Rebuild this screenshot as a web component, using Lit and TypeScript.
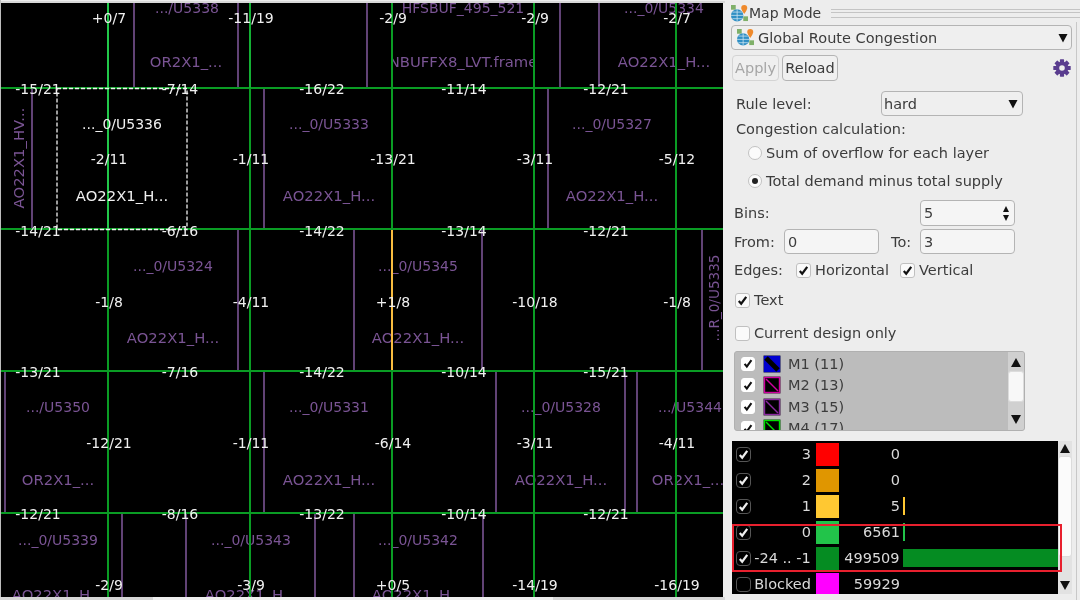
import {LitElement, css, html, svg} from 'lit';
import {customElement} from 'lit/decorators.js';

const COLS = [109, 251, 393, 535, 677];
const EDGE_COLS = [38, 180, 322, 464, 606];

// Congestion numbers, one row per grid line / grid row.
const NUMBERS: [number, number[], string[]][] = [
  [18, COLS, ['+0/7', '-11/19', '-2/9', '-2/9', '-2/7']],
  [89, EDGE_COLS, ['-15/21', '-7/14', '-16/22', '-11/14', '-12/21']],
  [159, COLS, ['-2/11', '-1/11', '-13/21', '-3/11', '-5/12']],
  [231, EDGE_COLS, ['-14/21', '-6/16', '-14/22', '-13/14', '-12/21']],
  [302, COLS, ['-1/8', '-4/11', '+1/8', '-10/18', '-1/8']],
  [372, EDGE_COLS, ['-13/21', '-7/16', '-14/22', '-10/14', '-15/21']],
  [443, COLS, ['-12/21', '-1/11', '-6/14', '-3/11', '-4/11']],
  [514, EDGE_COLS, ['-12/21', '-8/16', '-13/22', '-10/14', '-12/21']],
  [585, COLS, ['-2/9', '-3/9', '+0/5', '-14/19', '-16/19']],
];

// Cell outlines: x, y1, y2
const CELL_LINES: number[][] = [
  [134, 3, 88], [238, 3, 88], [367, 3, 88], [560, 3, 88], [599, 3, 88],
  [32, 88, 229], [264, 88, 229], [548, 88, 229],
  [238, 229, 371], [354, 229, 371], [482, 229, 371], [702, 229, 371],
  [5, 371, 513], [264, 371, 513], [496, 371, 513], [625, 371, 513], [637, 371, 513],
  [122, 513, 597], [186, 513, 597], [315, 513, 597], [354, 513, 597], [483, 513, 597],
];

const CELL_LABELS: [number, number, string][] = [
  [187, 8, '.../U5338'], [186, 61, 'OR2X1_...'], [463, 8, 'HFSBUF_495_521'],
  [664, 8, '..._0/U5334'], [664, 61, 'AO22X1_H...'],
  [329, 124, '..._0/U5333'], [329, 195, 'AO22X1_H...'],
  [612, 124, '..._0/U5327'], [612, 195, 'AO22X1_H...'],
  [173, 266, '..._0/U5324'], [173, 337, 'AO22X1_H...'],
  [418, 266, '..._0/U5345'], [418, 337, 'AO22X1_H...'],
  [58, 407, '.../U5350'], [58, 479, 'OR2X1_...'],
  [329, 407, '..._0/U5331'], [329, 479, 'AO22X1_H...'],
  [561, 407, '..._0/U5328'], [561, 479, 'AO22X1_H...'],
  [690, 407, '.../U5344'], [688, 479, 'OR2X1_...'],
  [58, 540, '..._0/U5339'], [51, 594, 'AO22X1_H'],
  [251, 540, '..._0/U5343'], [244, 594, 'AO22X1_H'],
  [418, 540, '..._0/U5342'], [411, 594, 'AO22X1_H'],
];

const LAYERS = [
  {name: 'M1 (11)', color: '#0000d0', solid: true},
  {name: 'M2 (13)', color: '#d000a0', solid: false},
  {name: 'M3 (15)', color: '#8a2aa0', solid: false},
  {name: 'M4 (17)', color: '#00e000', solid: false},
];

const BINS = [
  {label: '3', color: '#ff0000', count: '0', bar: 0, checked: true},
  {label: '2', color: '#e09600', count: '0', bar: 0, checked: true},
  {label: '1', color: '#ffc832', count: '5', bar: 2, checked: true},
  {label: '0', color: '#22c44a', count: '6561', bar: 2, checked: true},
  {label: '-24 .. -1', color: '#058c22', count: '499509', bar: 156, checked: true},
  {label: 'Blocked', color: '#ff00ff', count: '59929', bar: 0, checked: false},
];

const check = html`<svg class="tick" viewBox="0 0 14 14"><path d="M3 7.5l2.6 3L11 3" fill="none" stroke="currentColor" stroke-width="2.4"/></svg>`;
const arrow = html`<svg class="arrow" viewBox="0 0 10 10"><polygon points="0.5,1 9.5,1 5,9.5" fill="#111"/></svg>`;

const mapIcon = html`<svg class="map-icon" viewBox="0 0 18 18">
  <rect x="0" y="0" width="5" height="5" fill="#7fb069"/>
  <rect x="13" y="12" width="5" height="5" fill="#7fb069"/>
  <circle cx="6.5" cy="11" r="6.5" fill="#2f8fc4"/>
  <path d="M0 11h13M6.5 4.5v13M1.5 7.5h10M1.5 14.5h10" stroke="#cfe6f2" stroke-width=".8" fill="none"/>
  <path d="M14 0a3.2 3.2 0 0 1 3.2 3.2c0 2.2-3.2 6.3-3.2 6.3s-3.2-4.1-3.2-6.3A3.2 3.2 0 0 1 14 0z" fill="#ef8a2c"/>
</svg>`;

const gear = html`<svg class="gear" viewBox="0 0 18 18">
  ${[0, 45, 90, 135, 180, 225, 270, 315].map(
    (a) => svg`<rect x="6.9" y="0.3" width="4.2" height="4" rx=".6" fill="#5a3d8f" transform="rotate(${a} 9 9)"/>`,
  )}
  <circle cx="9" cy="9" r="4.6" fill="none" stroke="#5a3d8f" stroke-width="3.6"/>
</svg>`;

@customElement('app-root')
export class AppRoot extends LitElement {
  static styles = css`
    :host {
      display: flex;
      width: 1080px;
      height: 600px;
      overflow: hidden;
      background: #ededed;
      color: #3c3c3c;
      font: 14.5px 'DejaVu Sans', sans-serif;
      filter: blur(0.5px);
    }
    .canvas {
      flex: none;
      width: 725px;
      height: 600px;
      display: block;
    }
    .canvas text {
      font: 14px 'DejaVu Sans', sans-serif;
      text-anchor: middle;
      dominant-baseline: central;
    }
    .canvas text.wide { font-size: 14.8px; }
    .canvas text.tight { font-size: 13.6px; }
    .cell-text { fill: #7a5494; }
    .num-text { fill: #f0f0f0; }

    .panel {
      position: relative;
      flex: none;
      width: 355px;
      height: 600px;
      display: flex;
      flex-direction: column;
      align-items: flex-start;
    }
    .panel-edge {
      position: absolute;
      left: 351px;
      top: 22px;
      bottom: 0;
      width: 1px;
      background: #c8c8c8;
    }
    .title {
      display: flex;
      align-items: center;
      align-self: stretch;
      height: 20px;
      margin: 3px 0 0 6px;
      gap: 1px;
      font-size: 14px;
    }
    .grip {
      flex: 1;
      height: 7px;
      margin-left: 9px;
      border-top: 1px solid #c4c4c4;
      border-bottom: 1px solid #c4c4c4;
      background: linear-gradient(#ededed 2px, #c4c4c4 2px, #c4c4c4 3px, #ededed 3px);
    }
    .map-icon { width: 17px; height: 17px; flex: none; }
    .box {
      box-sizing: border-box;
      display: flex;
      align-items: center;
      border: 1px solid #b4b4b4;
      border-radius: 4px;
      background: #efefef;
    }
    .arrow { width: 10px; height: 10px; flex: none; margin-left: auto; }
    .combo {
      width: 341px;
      height: 25px;
      margin: 2px 0 0 6px;
      padding: 0 3px 0 5px;
      gap: 4px;
    }
    .actions {
      display: flex;
      align-items: center;
      align-self: stretch;
      height: 26px;
      margin: 5px 0 0 7px;
      gap: 3px;
    }
    .btn {
      box-sizing: border-box;
      height: 26px;
      padding: 0 2px;
      justify-content: center;
    }
    .btn.apply { width: 47px; color: #a6a6a6; border-color: #d4d4d4; }
    .btn.reload { width: 56px; background: #f0f0f0; }
    .gear { width: 18px; height: 18px; margin-left: 212px; }
    .rule {
      display: flex;
      align-items: center;
      height: 25px;
      margin: 10px 0 0 11px;
    }
    .rule label { width: 145px; }
    .select {
      width: 142px;
      height: 25px;
      padding: 0 4px 0 2px;
    }
    .line {
      display: flex;
      align-items: center;
      height: 20px;
      white-space: nowrap;
    }
    .calc { margin: 3px 0 0 11px; }
    .radio-row { margin-left: 23px; gap: 4px; }
    .radio-row.first { margin-top: 4px; }
    .radio-row.second { margin-top: 8px; }
    .radio {
      box-sizing: border-box;
      flex: none;
      width: 14px;
      height: 14px;
      border: 1px solid #c2c2c2;
      border-radius: 50%;
      background: #fbfbfb;
      display: flex;
      align-items: center;
      justify-content: center;
    }
    .radio.on::after {
      content: '';
      width: 6px;
      height: 6px;
      border-radius: 50%;
      background: #222;
    }
    .field {
      background: #f5f5f5;
      padding: 0 3px;
    }
    .bins {
      display: flex;
      align-items: center;
      height: 26px;
      margin: 9px 0 0 9px;
    }
    .bins label { width: 186px; }
    .spin {
      width: 95px;
      height: 26px;
      padding-right: 0;
    }
    .spin-arrows {
      display: flex;
      flex-direction: column;
      gap: 3px;
      margin: 0 5px 0 auto;
    }
    .tri-up, .tri-down {
      width: 0;
      height: 0;
      border-left: 3.5px solid transparent;
      border-right: 3.5px solid transparent;
    }
    .tri-up { border-bottom: 6px solid #111; }
    .tri-down { border-top: 6px solid #111; }
    .range {
      display: flex;
      align-items: center;
      height: 25px;
      margin: 3px 0 0 9px;
    }
    .range label.from { width: 50px; }
    .range label.to { width: 29px; margin-left: 12px; }
    .range .field { width: 95px; height: 25px; }
    .edges { margin: 6px 0 0 9px; }
    .edges .lead { width: 62px; }
    .check {
      box-sizing: border-box;
      flex: none;
      width: 15px;
      height: 15px;
      border: 1px solid #c0c0c0;
      border-radius: 3px;
      background: #fafafa;
      color: #111;
      display: flex;
      align-items: center;
      justify-content: center;
    }
    .tick { width: 13px; height: 13px; display: block; }
    .opt { display: flex; align-items: center; gap: 4px; }
    .edges .opt + .opt { margin-left: 11px; }
    .text-opt { margin: 10px 0 0 10px; }
    .design-opt { margin: 13px 0 0 10px; }
    .layers {
      box-sizing: border-box;
      position: relative;
      width: 291px;
      height: 80px;
      margin: 8px 0 0 9px;
      padding: 1px 0 0 6px;
      overflow: hidden;
      border: 1px solid #b0b0b0;
      border-radius: 3px;
      background: #bcbcbc;
    }
    .layer {
      display: flex;
      align-items: center;
      height: 21.5px;
      flex: none;
      gap: 7px;
    }
    .layer .check { width: 14px; height: 14px; background: #fff; border-color: #fff; }
    .layer svg.swatch { width: 18px; height: 18px; flex: none; margin-left: 1px; }
    .vbar {
      position: absolute;
      top: 0;
      right: 0;
      bottom: 0;
      display: flex;
      flex-direction: column;
      align-items: center;
      background: #e2e2e2;
    }
    .layers .vbar { width: 16px; background: #d0d0d0; padding: 6px 0; box-sizing: border-box; }
    .thumb {
      box-sizing: border-box;
      width: 100%;
      background: #f8f8f8;
      border: 1px solid #dcdcdc;
      border-radius: 3px;
    }
    .layers .thumb { height: 31px; margin-top: 4px; }
    .vbar .tri-down { margin-top: auto; }
    .tri-up.big, .tri-down.big { border-left-width: 5px; border-right-width: 5px; }
    .tri-up.big { border-bottom-width: 9px; }
    .tri-down.big { border-top-width: 9px; }
    .legend {
      position: relative;
      width: 340px;
      height: 153px;
      margin: 10px 0 0 7px;
      padding-right: 14px;
      box-sizing: border-box;
    }
    .bins-list {
      height: 153px;
      overflow: hidden;
      background: #000;
      color: #dadada;
    }
    .bin {
      display: flex;
      align-items: center;
      height: 26px;
    }
    .bin .check {
      margin-left: 4px;
      background: #000;
      border-color: #555;
      border-radius: 4px;
      color: #eee;
    }
    .bin-label { width: 60px; text-align: right; white-space: nowrap; }
    .bin-swatch { width: 23px; height: 23px; margin-left: 5px; flex: none; }
    .bin-count { width: 61px; text-align: right; }
    .bin-bar { height: 18px; margin-left: 3px; }
    .legend .vbar { width: 14px; padding: 3px 0 4px; box-sizing: border-box; }
    .legend .thumb { height: 101px; margin-top: 3px; background: #fbfbfb; }
    .highlight {
      position: absolute;
      left: 0;
      top: 83px;
      width: 330px;
      height: 48px;
      box-sizing: border-box;
      border: 2px solid #e8202e;
    }
  `;

  renderCanvas() {
    return html`<svg class="canvas" viewBox="0 0 725 600">
      <defs>
        <clipPath id="view"><rect x="1" y="3" width="722" height="594"/></clipPath>
        <clipPath id="nbuf"><rect x="392" y="3" width="142" height="85"/></clipPath>
      </defs>
      <rect width="725" height="600" fill="#ededed"/>
      <rect x="0" y="0" width="1" height="600" fill="#bdbdbd"/>
      <rect x="0" y="1.5" width="725" height="1" fill="#c4c4c4"/>
      <rect x="0" y="597" width="725" height="3" fill="#d6d6d6"/>
      <rect x="153" y="597" width="400" height="3" fill="#efefef"/>
      <rect x="1" y="3" width="722" height="594" fill="#000"/>
      <g clip-path="url(#view)">
        ${CELL_LINES.map(([x, y1, y2]) => svg`<line x1=${x} x2=${x} y1=${y1} y2=${y2} stroke="#7a5494" stroke-width="1.6"/>`)}
        ${CELL_LABELS.map(([x, y, t]) => svg`<text class="cell-text ${t.includes('X1') ? 'wide' : ''}" x=${x} y=${y}>${t}</text>`)}
        <text class="cell-text wide" x="463" y="61" clip-path="url(#nbuf)">NBUFFX8_LVT.frame</text>
        <text class="cell-text wide" x="18" y="158" transform="rotate(-90 18 158)">AO22X1_HV...</text>
        <text class="cell-text tight" x="714" y="298" transform="rotate(-90 714 298)">...R_0/U5335</text>
        ${[88, 229, 371, 513].map((y) => svg`<line x1="1" x2="723" y1=${y} y2=${y} stroke="#0a9c24" stroke-width="2"/>`)}
        ${[108, 250, 392, 534, 676].map((x) => svg`<line x1=${x} x2=${x} y1="3" y2="597" stroke="#0a9c24" stroke-width="2"/>`)}
        <line x1="108" x2="108" y1="3" y2="229" stroke="#22c84a" stroke-width="2"/>
        <line x1="250" x2="250" y1="3" y2="88" stroke="#14b034" stroke-width="2"/>
        <line x1="392" x2="392" y1="230" y2="370" stroke="#f8bc40" stroke-width="2"/>
        <rect x="57" y="88.5" width="130" height="141" fill="none" stroke="#f0f0f0" stroke-width="1.3" stroke-dasharray="4 2"/>
        <text class="num-text" x="122" y="124">..._0/U5336</text>
        <text class="num-text wide" x="122" y="195">AO22X1_H...</text>
        ${NUMBERS.map(([y, xs, vals]) => vals.map((v, i) => svg`<text class="num-text" x=${xs[i]} y=${y}>${v}</text>`))}
      </g>
    </svg>`;
  }

  renderLayer(layer: (typeof LAYERS)[number]) {
    return html`<div class="layer">
      <div class="check">${check}</div>
      <svg class="swatch" viewBox="0 0 18 18">
        <rect x="0.5" y="0.5" width="17" height="17" fill="#333"/>
        <rect x="1.5" y="1.5" width="15" height="15" fill=${layer.solid ? layer.color : '#000'} stroke=${layer.color} stroke-width="1.4"/>
        <path d="M3 3l12 12" stroke=${layer.solid ? '#000' : layer.color} stroke-width=${layer.solid ? 5 : 1.4}/>
      </svg>
      <span>${layer.name}</span>
    </div>`;
  }

  renderBin(bin: (typeof BINS)[number]) {
    return html`<div class="bin">
      <div class="check">${bin.checked ? check : ''}</div>
      <div class="bin-label">${bin.label}</div>
      <div class="bin-swatch" style="background:${bin.color}"></div>
      <div class="bin-count">${bin.count}</div>
      ${bin.bar ? html`<div class="bin-bar" style="width:${bin.bar}px;background:${bin.color}"></div>` : ''}
    </div>`;
  }

  render() {
    return html`
      ${this.renderCanvas()}
      <div class="panel">
        <div class="panel-edge"></div>
        <div class="title">${mapIcon}<span>Map Mode</span><div class="grip"></div></div>
        <div class="box combo">${mapIcon}<span>Global Route Congestion</span>${arrow}</div>
        <div class="actions">
          <div class="box btn apply">Apply</div>
          <div class="box btn reload">Reload</div>
          ${gear}
        </div>
        <div class="rule">
          <label>Rule level:</label>
          <div class="box select"><span>hard</span>${arrow}</div>
        </div>
        <div class="line calc">Congestion calculation:</div>
        <div class="line radio-row first"><div class="radio"></div><span>Sum of overflow for each layer</span></div>
        <div class="line radio-row second"><div class="radio on"></div><span>Total demand minus total supply</span></div>
        <div class="bins">
          <label>Bins:</label>
          <div class="box field spin">
            <span>5</span>
            <div class="spin-arrows"><div class="tri-up"></div><div class="tri-down"></div></div>
          </div>
        </div>
        <div class="range">
          <label class="from">From:</label>
          <div class="box field">0</div>
          <label class="to">To:</label>
          <div class="box field">3</div>
        </div>
        <div class="line edges">
          <span class="lead">Edges:</span>
          <div class="opt"><div class="check">${check}</div><span>Horizontal</span></div>
          <div class="opt"><div class="check">${check}</div><span>Vertical</span></div>
        </div>
        <div class="line opt text-opt"><div class="check">${check}</div><span>Text</span></div>
        <div class="line opt design-opt"><div class="check"></div><span>Current design only</span></div>
        <div class="layers">
          ${LAYERS.map((l) => this.renderLayer(l))}
          <div class="vbar">
            <div class="tri-up big"></div>
            <div class="thumb"></div>
            <div class="tri-down big"></div>
          </div>
        </div>
        <div class="legend">
          <div class="bins-list">${BINS.map((b) => this.renderBin(b))}</div>
          <div class="vbar">
            <div class="tri-up big"></div>
            <div class="thumb"></div>
            <div class="tri-down big"></div>
          </div>
          <div class="highlight"></div>
        </div>
      </div>
    `;
  }
}
